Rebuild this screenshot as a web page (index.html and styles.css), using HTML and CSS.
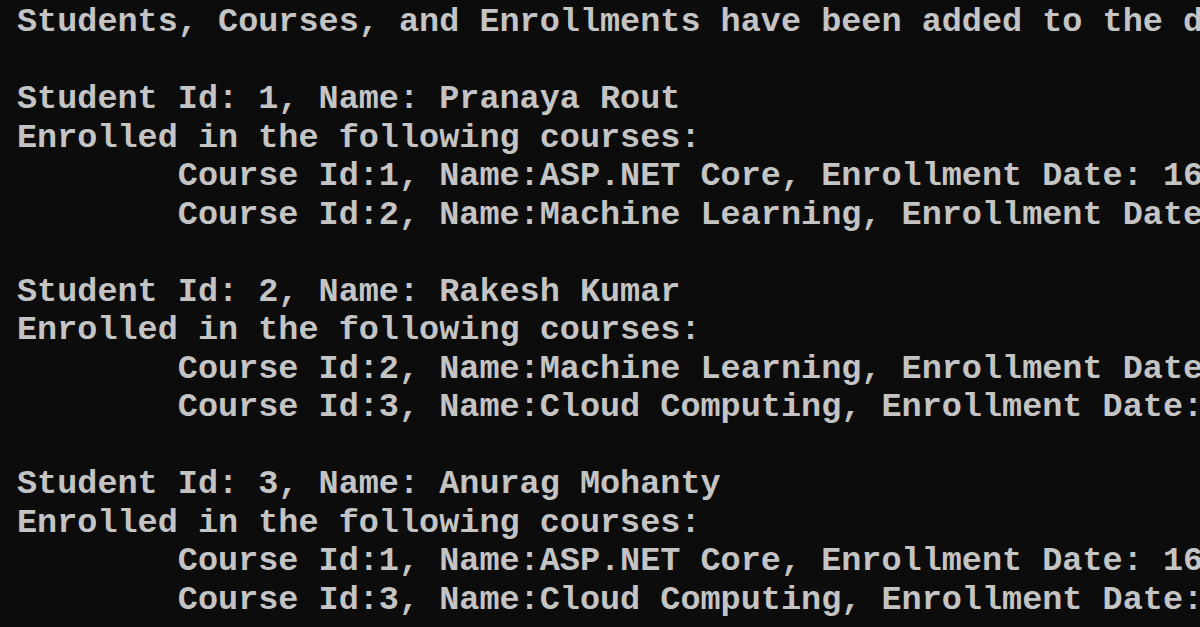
FILE: index.html
```html
<!DOCTYPE html>
<html>
<head>
<meta charset="utf-8">
<link rel="stylesheet" href="styles.css">
</head>
<body>
<main class="console"><pre class="output">Students, Courses, and Enrollments have been added to the database.

Student Id: 1, Name: Pranaya Rout
Enrolled in the following courses:
	Course Id:1, Name:ASP.NET Core, Enrollment Date: 16-06-2024
	Course Id:2, Name:Machine Learning, Enrollment Date: 16-06-2024

Student Id: 2, Name: Rakesh Kumar
Enrolled in the following courses:
	Course Id:2, Name:Machine Learning, Enrollment Date: 16-06-2024
	Course Id:3, Name:Cloud Computing, Enrollment Date: 16-06-2024

Student Id: 3, Name: Anurag Mohanty
Enrolled in the following courses:
	Course Id:1, Name:ASP.NET Core, Enrollment Date: 16-06-2024
	Course Id:3, Name:Cloud Computing, Enrollment Date: 16-06-2024</pre></main>
</body>
</html>
```
FILE: styles.css
```css
html, body {
  margin: 0;
  padding: 0;
  background: #0c0c0c;
  width: 1200px;
  height: 627px;
  overflow: hidden;
}
.console {
  padding: 3px 0 0 17px;
  height: 627px;
  box-sizing: border-box;
  overflow: hidden;
}
.output {
  margin: 0;
  font-family: "Liberation Mono", "DejaVu Sans Mono", monospace;
  font-size: 33.5px;
  font-weight: bold;
  line-height: 38.53px;
  color: #c4c4c4;
  white-space: pre;
  tab-size: 8;
}
```
